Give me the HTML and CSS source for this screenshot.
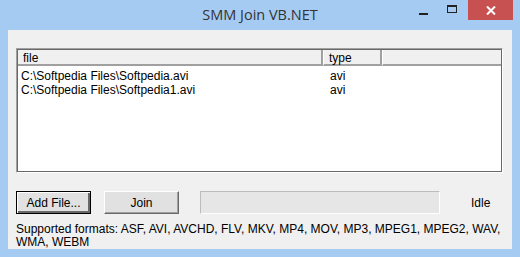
FILE: index.html
```html
<!DOCTYPE html>
<html lang="en">
<head>
    <meta charset="UTF-8">
    <title>SMM Join VB.NET</title>
    <link rel="stylesheet" href="styles.css">
</head>
<body>
    <div class="window">
        <!-- Title bar -->
        <div class="titlebar">
            <div class="title">SMM Join VB.NET</div>
            <div class="caption-buttons">
                <div class="cap-btn min"><span></span></div>
                <div class="cap-btn max"><span></span></div>
                <div class="cap-btn close">
                    <svg width="10" height="9" viewBox="0 0 10 9">
                        <path d="M1 0.5 L9 8.5 M9 0.5 L1 8.5" stroke="#fff" stroke-width="2"/>
                    </svg>
                </div>
            </div>
        </div>
        <!-- Client area -->
        <div class="client">
            <div class="listview">
                <div class="lv-header">
                    <div class="col col-file">file</div>
                    <div class="col col-type">type</div>
                    <div class="col col-rest"></div>
                </div>
                <div class="lv-body">
                    <div class="lv-row">
                        <div class="cell col-file">C:\Softpedia Files\Softpedia.avi</div>
                        <div class="cell col-type">avi</div>
                    </div>
                    <div class="lv-row">
                        <div class="cell col-file">C:\Softpedia Files\Softpedia1.avi</div>
                        <div class="cell col-type">avi</div>
                    </div>
                </div>
            </div>
            <div class="actions">
                <button class="btn focused">Add File...</button>
                <button class="btn">Join</button>
                <div class="progress"></div>
                <div class="status">Idle</div>
            </div>
            <div class="formats">Supported formats: ASF, AVI, AVCHD, FLV, MKV, MP4, MOV, MP3, MPEG1, MPEG2, WAV, WMA, WEBM</div>
        </div>
    </div>
</body>
</html>
```

FILE: styles.css
```css
:root {
    --frame: #a6cbf3;
    --client: #f0f0f0;
    --text: #000;
    --close: #c75050;
}
body {
    margin: 0;
    font-family: 'Liberation Sans', Arial, sans-serif;
    font-size: 12px;
    color: var(--text);
}
.window {
    width: 520px;
    height: 257px;
    background: var(--frame);
    display: flex;
    flex-direction: column;
    box-sizing: border-box;
}
.titlebar {
    height: 30px;
    display: flex;
    align-items: center;
    justify-content: center;
    position: relative;
}
.title {
    font-family: 'Open Sans', 'Noto Sans', sans-serif;
    font-size: 14.5px;
    color: #333;
    margin-top: -1px;
}
.caption-buttons {
    position: absolute;
    top: 0;
    right: 7px;
    display: flex;
    align-items: flex-start;
}
.cap-btn {
    height: 20px;
    display: flex;
    align-items: center;
    justify-content: center;
}
.cap-btn.min {
    width: 26px;
    margin-right: 1px;
}
.cap-btn.min span {
    width: 9px;
    height: 2px;
    background: #222;
    margin-top: 7px;
    margin-right: 4px;
}
.cap-btn.max {
    width: 26px;
    margin-right: 3px;
}
.cap-btn.max span {
    width: 8px;
    height: 5px;
    border: 1px solid #222;
    border-top-width: 2px;
    margin-top: -3px;
}
.cap-btn.close {
    width: 45px;
    background: var(--close);
}
.client {
    flex: 1;
    margin: 0 8px 8px 8px;
    background: var(--client);
    padding: 18px 0 0 8px;
    box-sizing: border-box;
}
.listview {
    width: 487px;
    height: 125px;
    box-sizing: border-box;
    border: 1px solid;
    border-color: #a0a0a0 #fff #fff #a0a0a0;
    outline: 1px solid #696969;
    outline-offset: -2px;
    background: #fff;
}
.lv-header {
    display: flex;
    height: 17px;
    background: var(--client);
    line-height: 16px;
}
.lv-header .col {
    box-sizing: border-box;
    border-right: 2px solid #a0a0a0;
    border-bottom: 2px solid #a0a0a0;
    border-top: 1px solid #fff;
    border-left: 1px solid #fff;
    padding-left: 5px;
}
.col-file {
    width: 306px;
}
.col-type {
    width: 59px;
}
.col-rest {
    flex: 1;
}
.lv-header .col-rest {
    border-right: none;
}
.lv-body {
    padding-top: 3px;
}
.lv-row {
    display: flex;
    height: 14px;
    line-height: 14px;
}
.cell {
    padding-left: 4px;
    box-sizing: border-box;
}
.lv-row .col-type {
    padding-left: 7px;
}
.actions {
    display: flex;
    align-items: center;
    margin-top: 18px;
    height: 23px;
}
.btn {
    font-family: inherit;
    font-size: 12px;
    width: 75px;
    height: 23px;
    padding: 0;
    background: #e1e1e1;
    color: #000;
    border: 1px solid;
    border-color: #fff #696969 #696969 #fff;
    box-shadow: inset -1px -1px 0 #a0a0a0;
    margin-right: 13px;
}
.btn.focused {
    border: 1px solid #000;
    box-shadow: inset 1px 1px 0 #fff, inset -2px -2px 0 #696969;
}
.progress {
    margin-left: 8px;
    width: 240px;
    height: 23px;
    box-sizing: border-box;
    border: 1px solid;
    border-color: #bcbcbc #fff #fff #bcbcbc;
    background: #e6e6e6;
}
.status {
    margin-left: 31px;
    color: #000;
}
.formats {
    margin-top: 9px;
    line-height: 13px;
    width: 490px;
}
```
